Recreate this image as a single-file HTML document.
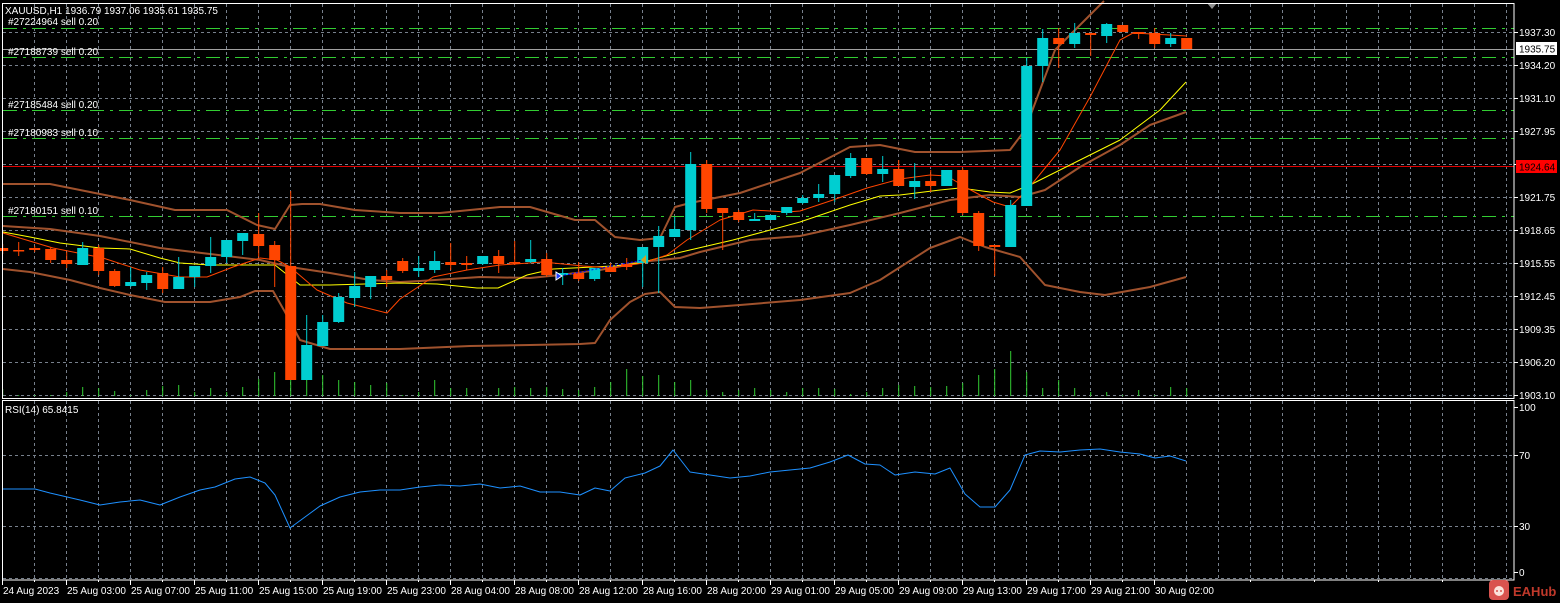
<!DOCTYPE html>
<html><head><meta charset="utf-8"><style>
html,body{margin:0;padding:0;background:#000;width:1560px;height:603px;overflow:hidden}
svg{display:block;font-family:"Liberation Sans","DejaVu Sans",sans-serif}
</style></head><body>
<svg id="s" width="1560" height="603" xmlns="http://www.w3.org/2000/svg">
<rect width="1560" height="603" fill="#000"/>
<g id="grid" stroke="#77808c" stroke-width="1" stroke-dasharray="3,3" fill="none"></g>
<g id="vol" stroke="#32cd32" stroke-width="1"></g>
<g fill="none" stroke-width="1">
<line x1="3" y1="49.5" x2="1514" y2="49.5" stroke="#a0a0a0"/>
<line x1="3" y1="166.5" x2="1514" y2="166.5" stroke="#e00000"/>
</g>
<g stroke="#32cd32" stroke-width="1" stroke-dasharray="14,6,3,6" fill="none">
<line x1="3" y1="28.5" x2="1514" y2="28.5"/>
<line x1="3" y1="57.5" x2="1514" y2="57.5"/>
<line x1="3" y1="110.5" x2="1514" y2="110.5"/>
<line x1="3" y1="138.5" x2="1514" y2="138.5"/>
<line x1="3" y1="216.5" x2="1514" y2="216.5"/>
</g>
<g id="lines" fill="none"></g>
<g id="candles"></g>
<line x1="560" y1="276" x2="643" y2="260" stroke="#0000ff" stroke-dasharray="2,2"/>
<path d="M556 272 L562 276 L556 280 Z" fill="#2040ff" stroke="#fff" stroke-width="1"/>
<path d="M646 255 L646 264 L641 260 Z" fill="#d4a020"/>
<path d="M1207 3 L1217 3 L1212 9 Z" fill="#909090"/>
<g stroke="#fff" stroke-width="1" fill="none">
<rect x="2.5" y="3.5" width="1511.5" height="395"/>
<rect x="2.5" y="400.5" width="1511.5" height="179.5"/>
</g>
<g fill="#fff" font-size="10">
<text x="5" y="14">XAUUSD,H1  1936.79 1937.06 1935.61 1935.75</text>
<text x="8" y="25">#27224964 sell 0.20</text>
<text x="8" y="55">#27188739 sell 0.20</text>
<text x="8" y="108">#27185484 sell 0.20</text>
<text x="8" y="136">#27180983 sell 0.10</text>
<text x="8" y="214">#27180151 sell 0.10</text>
<text x="5" y="413">RSI(14) 65.8415</text>
</g>
<g id="axis" fill="#fff" font-size="10"></g>
<rect x="1516" y="42" width="41" height="13" fill="#fff"/>
<text x="1519" y="52.5" fill="#000" font-size="10">1935.75</text>
<rect x="1516" y="160" width="41" height="13" fill="#ff0000"/>
<text x="1519" y="170.5" fill="#000" font-size="10">1924.64</text>
<rect x="1489" y="580" width="20" height="20" rx="4" fill="#d9534f"/>
<circle cx="1499" cy="591" r="5" fill="#fbe3dc"/>
<circle cx="1497" cy="591" r="1" fill="#d9534f"/><circle cx="1501" cy="591" r="1" fill="#d9534f"/>
<text x="1513" y="596" fill="#c0392b" font-size="13" font-weight="bold">EAHub</text>
</svg>
<script>
var NS="http://www.w3.org/2000/svg";
function el(p,t,a){var e=document.createElementNS(NS,t);for(var k in a)e.setAttribute(k,a[k]);p.appendChild(e);return e;}
var g=document.getElementById('grid');
for(var x=34;x<1514;x+=32){el(g,'line',{x1:x+.5,y1:4,x2:x+.5,y2:398});el(g,'line',{x1:x+.5,y1:401,x2:x+.5,y2:580});}
var py=[32,65,98,131,164,197,230,263,296,329,362,395];
var pl=["1937.30","1934.20","1931.10","1927.95","","1921.75","1918.65","1915.55","1912.45","1909.35","1906.20","1903.10"];
var ax=document.getElementById('axis');
py.forEach(function(y,i){el(g,'line',{x1:3,y1:y+.5,x2:1514,y2:y+.5});el(ax,'rect',{x:1514,y:y,width:4,height:1});if(pl[i]){var t=el(ax,'text',{x:1519,y:y+4});t.textContent=pl[i];}});
[455,526,578].forEach(function(y){el(g,'line',{x1:3,y1:y+.5,x2:1514,y2:y+.5});});
[[407,"100"],[455,"70"],[526,"30"],[572,"0"]].forEach(function(a){var t=el(ax,'text',{x:1519,y:a[0]+4});t.textContent=a[1];el(ax,'rect',{x:1514,y:a[0],width:4,height:1});});
var tl=["24 Aug 2023","25 Aug 03:00","25 Aug 07:00","25 Aug 11:00","25 Aug 15:00","25 Aug 19:00","25 Aug 23:00","28 Aug 04:00","28 Aug 08:00","28 Aug 12:00","28 Aug 16:00","28 Aug 20:00","29 Aug 01:00","29 Aug 05:00","29 Aug 09:00","29 Aug 13:00","29 Aug 17:00","29 Aug 21:00","30 Aug 02:00"];
tl.forEach(function(s,i){var x=2+64*i;el(ax,'rect',{x:x,y:580,width:1,height:5});var t=el(ax,'text',{x:x+1,y:594});t.textContent=s;});
for(var x=34;x<1514;x+=64){el(ax,'rect',{x:x,y:580,width:1,height:2});}
// volumes
var vt=[389,395,395,395,392,387,388,391,395,390,386,385,392,388,392,387,379,372,349,367,375,380,382,385,383,395,392,380,388,388,396,388,387,388,387,389,390,387,382,369,376,375,382,380,390,392,390,388,390,392,388,388,389,394,392,388,385,386,387,386,383,375,369,351,372,388,380,388,392,392,395,390,395,387,388];
var v=document.getElementById('vol');
vt.forEach(function(y,k){var x=2.7+16*k;el(v,'line',{x1:x,y1:y,x2:x,y2:396});});
// lines
var L=document.getElementById('lines');
function pl2(pts,c,w){el(L,'polyline',{points:pts.map(function(p){return p.join(',')}).join(' '),stroke:c,'stroke-width':w,'stroke-linejoin':'round'});}
pl2([[3,184],[50,184],[90,192],[130,200],[175,210],[227,210],[257,225],[275,229],[290,205],[302,204],[320,204],[355,210],[400,213],[440,213],[500,207],[530,207],[575,220],[595,220],[615,237],[640,240],[660,238],[675,207],[690,203],[740,193],[800,173],[850,147],[880,145],[915,152],[960,152],[1010,150],[1025,130],[1055,50],[1104,1]],"#a0522d",2);
pl2([[3,226],[50,229],[100,236],[160,248],[260,260],[290,267],[330,273],[370,280],[400,282],[420,281],[480,277],[530,278],[560,275],[600,270],[640,262],[680,258],[700,252],[750,240],[800,236],[850,225],[900,213],[950,200],[990,195],[1020,197],[1045,190],[1080,167],[1120,145],[1150,125],[1186,112]],"#a0522d",2);
pl2([[3,269],[30,272],[70,280],[100,288],[130,295],[165,302],[210,302],[240,297],[255,291],[273,291],[285,312],[300,340],[330,349],[400,349],[470,346],[530,345],[580,344],[595,343],[610,320],[630,302],[645,294],[660,292],[675,307],[700,308],[740,305],[800,300],[850,293],[880,280],[930,248],[960,237],[985,247],[1020,257],[1045,285],[1080,292],[1105,295],[1150,287],[1186,277]],"#a0522d",2);
pl2([[3,232],[30,237],[60,243],[100,248],[130,249],[160,258],[180,263],[210,265],[275,265],[300,285],[330,285],[400,283],[437,284],[477,288],[498,288],[527,275],[553,269],[613,266],[640,263],[677,253],[733,240],[800,222],[850,205],[880,196],[900,195],[940,190],[960,188],[990,192],[1010,193],[1030,185],[1070,165],[1120,140],[1160,110],[1186,82]],"#ffff00",1);
pl2([[3,233],[53,248],[103,258],[140,270],[180,277],[207,277],[233,267],[260,258],[277,260],[290,267],[317,290],[347,303],[387,313],[400,299],[433,277],[467,270],[500,265],[543,262],[583,266],[613,268],[643,263],[667,255],[687,240],[720,220],[753,210],[787,212],[800,211],[833,200],[867,188],[900,179],[930,175],[947,176],[967,188],[993,202],[1010,207],[1027,190],[1060,150],[1090,97],[1120,40],[1133,33],[1187,36]],"#ff4500",1);
pl2([[3,489],[35,489],[50,493],[80,500],[100,505],[120,502],[140,500],[160,505],[180,497],[200,490],[215,487],[235,479],[250,477],[265,483],[275,495],[290,528],[305,517],[320,506],[340,497],[360,492],[380,490],[400,490],[420,487],[440,485],[460,486],[480,484],[500,488],[520,486],[540,492],[560,492],[580,495],[595,488],[610,491],[625,478],[645,473],[660,466],[673,450],[690,472],[710,475],[730,478],[750,476],[770,472],[790,470],[810,468],[830,462],[848,455],[865,464],[880,465],[895,475],[915,472],[935,474],[950,468],[965,494],[980,507],[995,507],[1010,490],[1025,455],[1040,451],[1060,452],[1080,450],[1100,449],[1120,452],[1140,454],[1155,458],[1170,456],[1186,461]],"#1e90ff",1);
// candles: color(c=cyan,r=red), bodyTop, bodyBot, wickTop, wickBot
var C=[
"r,248,251,244,254","r,250,251,242,256","r,248,250,246,252","r,249,260,247,263","r,260,264,252,268","c,248,265,242,265","r,248,271,245,275","r,271,286,269,287","c,282,286,267,287","c,275,283,272,290","r,273,289,267,293","c,277,289,257,289","c,266,277,266,287","c,257,266,237,273","c,240,257,240,263","c,233,241,233,255","r,234,246,213,257","r,245,260,241,287","r,266,380,191,380","c,345,380,315,380","c,322,346,315,346","c,297,322,293,323","c,286,298,272,307","c,276,287,276,299","r,276,280,270,287",
"r,261,271,258,273","c,268,271,256,277","c,261,270,251,273","r,262,265,243,270","r,263,265,256,270","c,256,264,256,265","r,256,264,250,273","r,262,263,241,265","c,259,262,240,263","r,259,275,253,277","c,273,275,268,285","r,273,279,262,281","c,268,279,268,281","r,267,272,263,272","r,264,267,258,270","c,247,263,247,287","c,236,247,226,293","c,229,237,217,237","c,164,230,152,240","r,164,209,160,213","r,208,213,208,250","r,212,220,210,222","c,219,221,213,221","c,215,220,215,220","c,207,213,207,215",
"c,198,203,195,204","c,194,198,184,202","c,175,194,175,202","c,158,176,153,178","r,158,174,158,175","c,169,174,156,182","r,169,186,160,186","c,181,187,163,199","r,181,186,170,192","c,170,186,170,186","r,170,213,168,215","r,213,246,211,251","r,245,247,245,276","c,205,247,200,247","c,66,206,58,206","c,38,66,29,82","r,38,44,28,68","c,33,44,23,48","r,33,35,33,56","c,24,36,23,43","r,25,32,25,32","r,32,34,32,39","r,33,44,28,48","c,38,44,33,47","r,38,49,38,49"];
var G=document.getElementById('candles');
C.forEach(function(s,k){var a=s.split(','),col=a[0]=='c'?'#00ced1':'#ff4500';var bt=+a[1],bb=+a[2],wt=+a[3],wb=+a[4];var x=2.7+16*k;
el(G,'line',{x1:x,y1:wt,x2:x,y2:wb,stroke:col,'stroke-width':1});
var h=Math.max(bb-bt,1.5);el(G,'rect',{x:x-5.5,y:bt,width:11,height:h,fill:col});});
</script>
</body></html>
